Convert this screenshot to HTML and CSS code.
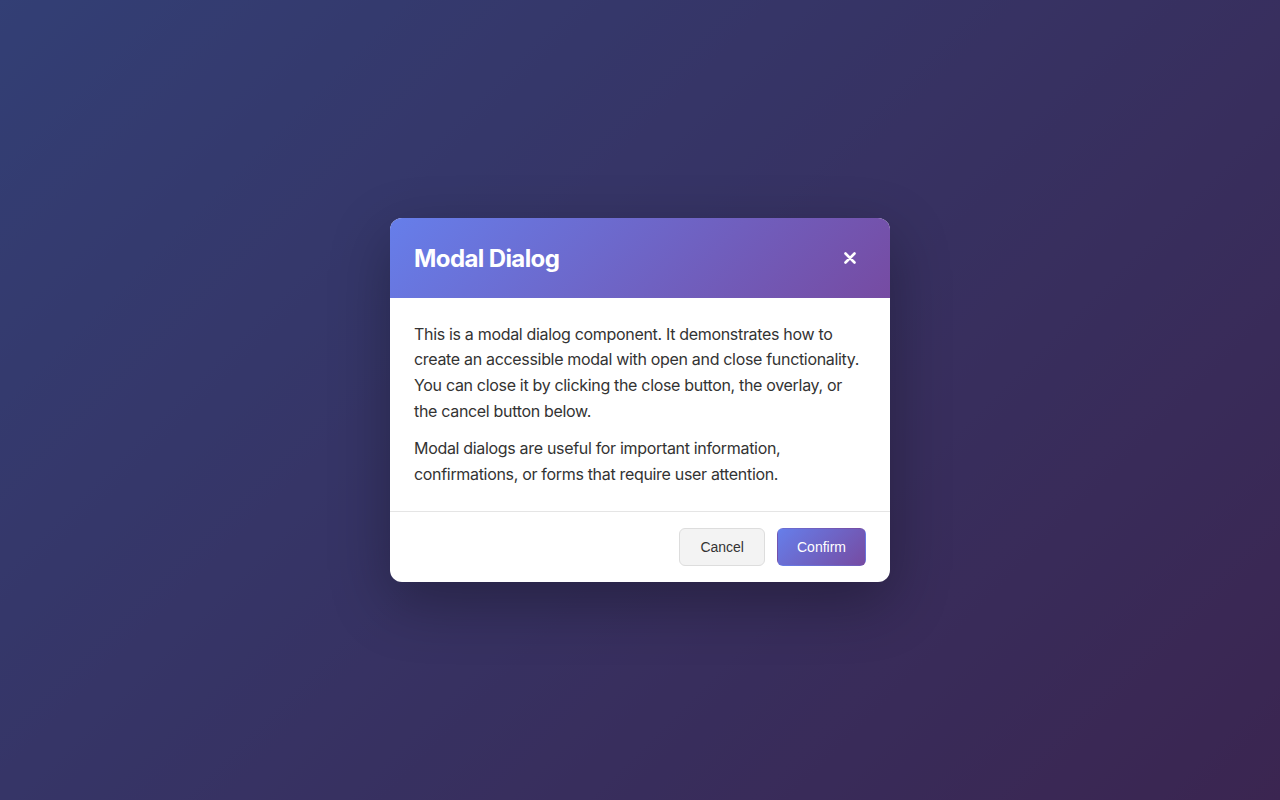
FILE: index.html
```html
<!DOCTYPE html>
<html lang="en">
<head>
<meta charset="utf-8">
<title>Modal Dialog</title>
<link rel="stylesheet" href="styles.css">
</head>
<body>
<div class="page">
  <div class="overlay">
    <div class="modal" role="dialog" aria-modal="true" aria-labelledby="modal-title">
      <div class="modal-header">
        <h2 id="modal-title" class="modal-title">Modal Dialog</h2>
        <button class="close-btn" aria-label="Close">
          <svg width="12" height="12" viewBox="0 0 12 12"><path d="M1.5 1.5 L10.5 10.5 M10.5 1.5 L1.5 10.5" stroke="#fff" stroke-width="2.6" stroke-linecap="round"/></svg>
        </button>
      </div>
      <div class="modal-body">
        <p>This is a modal dialog component. It demonstrates how to create an accessible modal with open and close functionality. You can close it by clicking the close button, the overlay, or the cancel button below.</p>
        <p>Modal dialogs are useful for important information, confirmations, or forms that require user attention.</p>
      </div>
      <div class="modal-footer">
        <button class="btn btn-secondary">Cancel</button>
        <button class="btn btn-primary">Confirm</button>
      </div>
    </div>
  </div>
</div>
</body>
</html>
```

FILE: styles.css
```css
* { box-sizing: border-box; }
html, body { margin: 0; padding: 0; height: 100%; }
body {
  font-family: Inter, "Noto Sans", sans-serif;
  background: linear-gradient(135deg, #667eea 0%, #764ba2 100%);
}
.page { width: 100%; height: 100%; }
.overlay {
  width: 100%;
  height: 100%;
  background: rgba(0, 0, 0, 0.5);
  display: flex;
  align-items: center;
  justify-content: center;
}
.modal {
  width: 500px;
  background: #fff;
  border-radius: 12px;
  overflow: hidden;
  box-shadow: 0 20px 60px rgba(0, 0, 0, 0.3);
}
.modal-header {
  display: flex;
  align-items: center;
  justify-content: space-between;
  padding: 24px;
  background: linear-gradient(135deg, #667eea 0%, #764ba2 100%);
  color: #fff;
}
.modal-title {
  margin: 0;
  font-size: 24px;
  font-weight: 700;
  line-height: 30px;
  letter-spacing: -0.6px;
  padding-top: 2px;
}
.close-btn {
  width: 32px;
  height: 32px;
  padding: 0;
  border: none;
  background: transparent;
  display: flex;
  align-items: center;
  justify-content: center;
  cursor: pointer;
  border-radius: 6px;
}
.modal-body {
  padding: 24px;
  color: #333;
  font-size: 16px;
  line-height: 1.6;
  letter-spacing: -0.32px;
}
.modal-body p { margin: 0 0 12px; }
.modal-body p:last-child { margin-bottom: 0; }
.modal-footer {
  display: flex;
  justify-content: flex-end;
  gap: 12px;
  padding: 16px 24px;
  border-top: 1px solid #e5e5e5;
}
.btn {
  font-family: "Liberation Sans", Arial, sans-serif;
  font-size: 14px;
  line-height: 16px;
  padding: 10px 20px;
  border-radius: 6px;
  border: 1px solid transparent;
  cursor: pointer;
}
.btn-secondary {
  background: #f3f3f3;
  border-color: #dddddd;
  color: #333;
}
.btn-primary {
  padding: 10px 19px;
  background: linear-gradient(135deg, #667eea 0%, #764ba2 100%);
  color: #fff;
}
```
